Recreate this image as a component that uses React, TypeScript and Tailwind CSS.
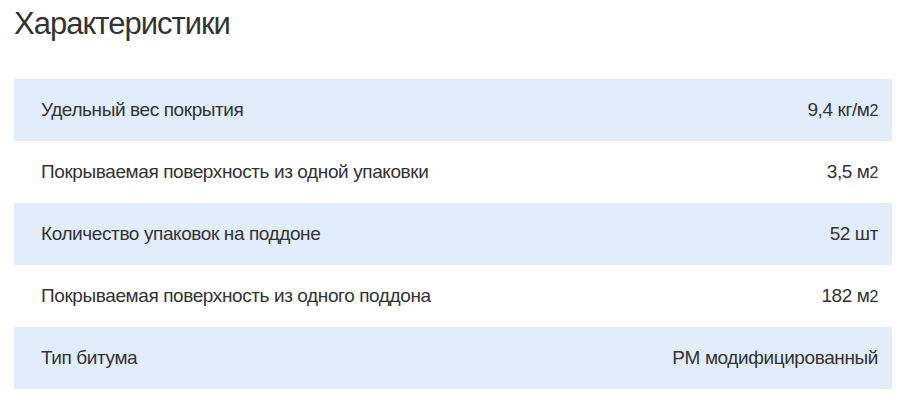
import React from "react";

const rows: { label: string; value: React.ReactNode }[] = [
  { label: "Удельный вес покрытия", value: <>9,4 кг/м<span className="text-[16px]">2</span></> },
  { label: "Покрываемая поверхность из одной упаковки", value: <>3,5 м<span className="text-[16px]">2</span></> },
  { label: "Количество упаковок на поддоне", value: <>52 шт</> },
  { label: "Покрываемая поверхность из одного поддона", value: <>182 м<span className="text-[16px]">2</span></> },
  { label: "Тип битума", value: <>PM модифицированный</> },
];

export default function App() {
  return (
    <div className="w-[906px] h-[402px] bg-white text-[#333] font-['Liberation_Sans',Arial,sans-serif] overflow-hidden">
      <div className="pl-[14px] pr-[14px] pt-[4px]">
        <h2 className="text-[31px] leading-[40px] tracking-[-1px] text-[#333]">Характеристики</h2>
        <div className="mt-[35px] flex flex-col">
          {rows.map((r, i) => (
            <div
              key={i}
              className={`flex items-center justify-between h-[62px] pl-[27px] pr-[14px] text-[19px] tracking-[-0.4px] ${i % 2 === 0 ? "bg-[#e1edfb]" : "bg-white"}`}
            >
              <span>{r.label}</span>
              <span>{r.value}</span>
            </div>
          ))}
        </div>
      </div>
    </div>
  );
}
